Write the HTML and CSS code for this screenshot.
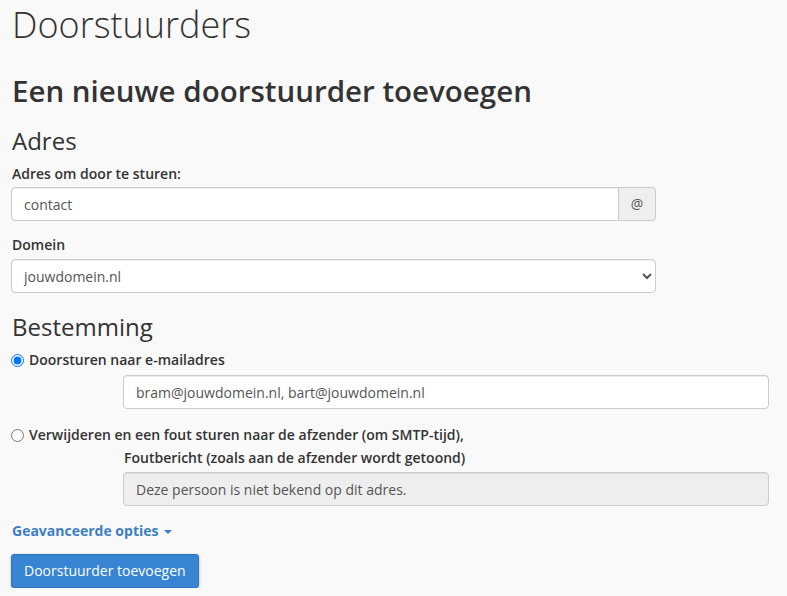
FILE: index.html
```html
<!DOCTYPE html>
<html lang="nl">
  <head>
    <meta charset="UTF-8" />
    <title>Doorstuurders</title>
    <link rel="stylesheet" href="styles.css">
  </head>
  <body>
    <div class="page">
      <h1 class="page-title">Doorstuurders</h1>
      <h2 class="section-title">Een nieuwe doorstuurder toevoegen</h2>

      <form>
        <h3 class="group-title">Adres</h3>
        <label class="field-label" for="email">Adres om door te sturen:</label>
        <div class="input-group">
          <input type="text" id="email" class="form-control" value="contact" />
          <span class="input-addon">@</span>
        </div>

        <label class="field-label label-domain" for="domain">Domein</label>
        <select id="domain" class="form-control form-select">
          <option>jouwdomein.nl</option>
        </select>

        <h3 class="group-title title-dest">Bestemming</h3>
        <label class="radio-label">
          <input type="radio" name="action" value="fwd" checked />
          Doorsturen naar e-mailadres
        </label>
        <div class="indented">
          <input type="text" class="form-control" value="bram@jouwdomein.nl, bart@jouwdomein.nl" />
        </div>

        <label class="radio-label radio-fail">
          <input type="radio" name="action" value="fail" />
          Verwijderen en een fout sturen naar de afzender (om SMTP-tijd),
        </label>
        <div class="indented">
          <label class="field-label label-fail" for="failmsg">Foutbericht (zoals aan de afzender wordt getoond)</label>
          <input type="text" id="failmsg" class="form-control" value="Deze persoon is niet bekend op dit adres." disabled />
        </div>

        <a href="#" class="advanced-link">Geavanceerde opties <span class="caret"></span></a>

        <div class="actions">
          <button type="submit" class="btn-primary">Doorstuurder toevoegen</button>
        </div>
      </form>
    </div>
  </body>
</html>
```

FILE: styles.css
```css
body {
  font-family: "Open Sans", Arial, sans-serif;
  font-size: 14px;
  line-height: 20px;
  color: #333333;
  margin: 0;
  padding: 0;
  background-color: #f9f9f9;
}
.page {
  padding: 5px 18px 0 11px;
}
.page-title {
  font-size: 36px;
  font-weight: 300;
  line-height: 40px;
  margin: 0 0 0 1px;
}
.section-title {
  font-size: 29.5px;
  font-weight: 600;
  line-height: 34px;
  margin: 29px 0 0 1px;
}
.group-title {
  font-size: 24px;
  font-weight: 400;
  line-height: 30px;
  margin: 18px 0 0 1px;
}
.title-dest {
  margin-top: 19px;
}
.field-label {
  display: block;
  font-weight: 600;
  margin: 8px 0 3px 1px;
}
.label-domain {
  margin-top: 14px;
  margin-bottom: 4px;
}
.form-control {
  display: block;
  width: 100%;
  height: 34px;
  padding: 6px 12px;
  font-family: inherit;
  font-size: 14px;
  color: #555555;
  background-color: #ffffff;
  border: 1px solid #cccccc;
  border-radius: 4px;
  box-shadow: inset 0 1px 1px rgba(0, 0, 0, 0.075);
  box-sizing: border-box;
  margin: 0;
}
.form-control:disabled {
  background-color: #eeeeee;
}
.input-group {
  display: flex;
  width: 645px;
}
.input-group .form-control {
  flex: 1;
  border-radius: 4px 0 0 4px;
}
.input-addon {
  width: 37px;
  box-sizing: border-box;
  display: flex;
  align-items: center;
  justify-content: center;
  font-size: 14px;
  color: #555555;
  background-color: #eeeeee;
  border: 1px solid #cccccc;
  border-left: none;
  border-radius: 0 4px 4px 0;
}
.form-select {
  width: 645px;
  padding: 6px 8px;
}
.radio-label {
  display: flex;
  align-items: center;
  gap: 5px;
  font-weight: 600;
  margin: 8px 0 5px 0;
}
.radio-label input {
  margin: 0;
  width: 13px;
  height: 13px;
}
.radio-fail {
  margin-top: 16px;
  margin-bottom: 0;
}
.indented {
  margin-left: 112px;
}
.label-fail {
  margin: 3px 0 4px 1px;
}
.advanced-link {
  display: inline-block;
  margin: 15px 0 0 1px;
  font-weight: 700;
  color: #3d7ec2;
  text-decoration: none;
}
.caret {
  display: inline-block;
  width: 0;
  height: 0;
  margin-left: 2px;
  vertical-align: middle;
  border-top: 4px solid #3d7ec2;
  border-left: 4px solid transparent;
  border-right: 4px solid transparent;
}
.actions {
  margin-top: 13px;
}
.btn-primary {
  font-family: inherit;
  font-size: 14px;
  line-height: 20px;
  height: 34px;
  padding: 6px 12px;
  color: #ffffff;
  background-color: #3784d3;
  border: 1px solid #2f74bd;
  border-radius: 3px;
  box-shadow: 0 1px 3px rgba(0, 0, 0, 0.25);
  cursor: pointer;
}
```
